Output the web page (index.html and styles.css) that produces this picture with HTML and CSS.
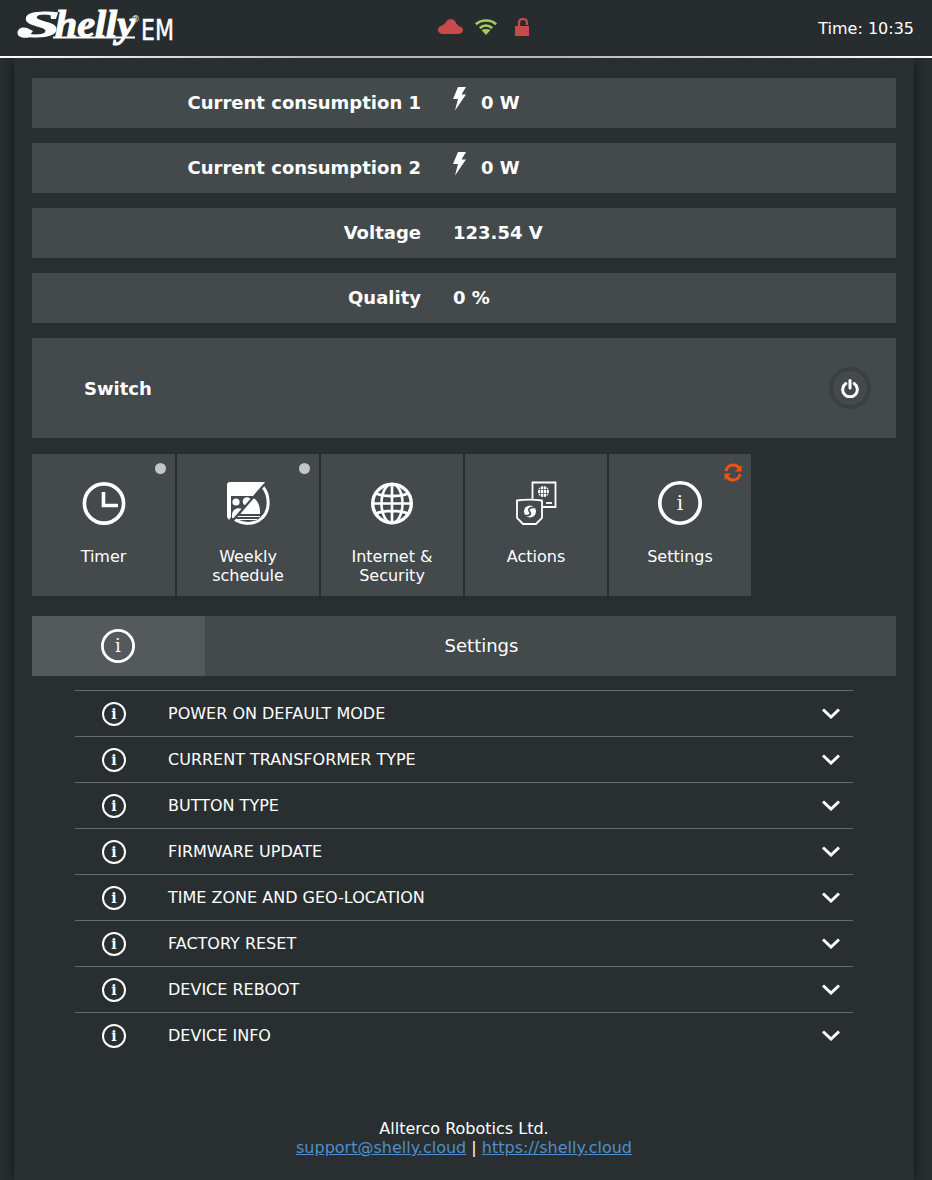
FILE: index.html
```html
<!DOCTYPE html>
<html lang="en">
<head>
<meta charset="utf-8">
<title>Shelly EM</title>
<link rel="stylesheet" href="styles.css">
</head>
<body>
<svg class="defs" width="0" height="0" aria-hidden="true">
  <symbol id="info" viewBox="0 0 34 34">
    <circle cx="17" cy="17" r="15.6" fill="none" stroke="currentColor" stroke-width="2.8"/>
  </symbol>
  <symbol id="chev" viewBox="0 0 18 11">
    <path d="M1 1.500 9 9 17 1.500" fill="none" stroke="currentColor" stroke-width="3"/>
  </symbol>
  <symbol id="bolt" viewBox="0 0 14 24">
    <path d="M6 0h8L9.500 7.500H14L3 23.500 6 12H1z" fill="currentColor"/>
  </symbol>
</svg>
<header class="topbar">
  <svg class="logo" width="180" height="56" viewBox="0 0 180 56">
    <path d="M.5 33C.5 28 6 26.500 10 28L16 31 11 37.500C6 38.500 .5 37 .5 33z" fill="#fff"/>
    <path d="M36 37.500H118" stroke="#fff" stroke-width="1.800"/>
    <text class="logo-script" y="37"><tspan x="3" textLength="40" lengthAdjust="spacingAndGlyphs">S</tspan><tspan x="38" textLength="80" lengthAdjust="spacingAndGlyphs">helly</tspan></text>
    <text class="logo-reg" x="114" y="22">®</text>
    <text class="logo-em" x="124" y="40" textLength="33" lengthAdjust="spacingAndGlyphs">EM</text>
  </svg>
  <div class="status">
    <svg class="st-cloud" width="25" height="15" viewBox="0 0 26 17" preserveAspectRatio="none"><path d="M5.500 17C2.500 17 0 15 0 12.200 0 9.600 2 8 4 7.600 4.500 6.800 5.500 6 7 6 8 2.500 10.500 0 13.500 0 16.500 0 18.500 2.500 19 5.500 19.800 5.400 20.500 6.500 21 7.800 23.800 8 26 9.800 26 12.500 26 15 24 17 21 17z" fill="#c94a4a"/></svg>
    <svg class="st-wifi" width="22" height="16" viewBox="0 0 22 16"><g fill="none" stroke="#a4cc5a" stroke-width="2.600"><path d="M.8 5.200C6.500 .2 15.500 .2 21.200 5.200"/><path d="M4.800 9C8.500 5.800 13.500 5.800 17.200 9"/></g><path d="M6.500 11 11 16 15.500 11C13 9.500 9 9.500 6.500 11z" fill="#a4cc5a"/></svg>
    <svg class="st-lock" width="14" height="18" viewBox="0 0 14 18"><path d="M4 9V5C4 2.500 5.500 1 8 1S12 2.500 12 5V7" fill="none" stroke="#c94a4a" stroke-width="2.200"/><rect y="8" width="14" height="10" fill="#c94a4a"/></svg>
  </div>
  <div class="clock">Time: 10:35</div>
</header>
<main class="panel">
  <section class="metrics">
    <div class="metric"><div class="m-label">Current consumption 1</div><div class="m-value"><svg class="bolt" width="14" height="24"><use href="#bolt"/></svg><span>0 W</span></div></div>
    <div class="metric"><div class="m-label">Current consumption 2</div><div class="m-value"><svg class="bolt" width="14" height="24"><use href="#bolt"/></svg><span>0 W</span></div></div>
    <div class="metric"><div class="m-label">Voltage</div><div class="m-value"><span>123.54 V</span></div></div>
    <div class="metric"><div class="m-label">Quality</div><div class="m-value"><span>0 %</span></div></div>
  </section>
  <section class="switch">
    <div class="switch-name">Switch</div>
    <div class="power"><svg width="18" height="19" viewBox="0 0 18 19"><path d="M4.800 4.600a7.300 7.300 0 1 0 8.400 0" fill="none" stroke="#fff" stroke-width="3" stroke-linecap="round"/><path d="M9 1.500V9" fill="none" stroke="#fff" stroke-width="3" stroke-linecap="round"/></svg></div>
  </section>
  <nav class="tiles">
    <div class="tile">
      <span class="dot"></span>
      <svg class="t-icon" width="44" height="44" viewBox="0 0 44 44"><circle cx="22" cy="22.500" r="19.600" fill="none" stroke="#fff" stroke-width="3.600"/><path d="M21.500 11V24.500H36" fill="none" stroke="#fff" stroke-width="3.600"/></svg>
      <div class="t-label">Timer</div>
    </div>
    <div class="tile">
      <span class="dot"></span>
      <svg class="t-icon" width="44" height="44" viewBox="0 0 44 44">
        <path d="M4 1H41L28 15H5V36L3 39 1 36V4C1 2 2 1 4 1z" fill="#fff"/>
        <circle cx="10" cy="21" r="3.600" fill="#fff"/>
        <circle cx="21" cy="20.500" r="4.300" fill="#fff"/>
        <path d="M6 33C7 28 12 26 16 28L8 37H6z" fill="#fff"/>
        <path d="M37 6C44 15 44 30 36 37 29 44 17 44 8 38" fill="none" stroke="#fff" stroke-width="3"/>
        <path d="M27 17C32 19 34.500 26 34 33H14z" fill="#fff"/>
        <path d="M11 35.500H34M9 38.500H31" stroke="#fff" stroke-width="1"/>
        <path d="M41 .5 3 44" stroke="#44494c" stroke-width="2.200"/>
      </svg>
      <div class="t-label">Weekly<br>schedule</div>
    </div>
    <div class="tile">
      <svg class="t-icon" width="44" height="44" viewBox="0 0 44 44"><g fill="none" stroke="#fff"><circle cx="22" cy="22.500" r="19.300" stroke-width="3.400"/><ellipse cx="22" cy="22.500" rx="10.500" ry="19.500" stroke-width="2.600"/><path d="M22 3V42M3 22.500H41M6 12.500C14 16 30 16 38 12.500M6 32.500C14 29 30 29 38 32.500" stroke-width="2.600"/></g></svg>
      <div class="t-label">Internet &amp;<br>Security</div>
    </div>
    <div class="tile">
      <svg class="t-icon" width="44" height="44" viewBox="0 0 44 44">
        <g fill="none" stroke="#fff" stroke-width="1.800"><path d="M18.500 18V1.500H41.500V26H28"/><path d="M3 19.500C9 18.500 21 18.500 28 19.500V37L22 43H9L3 37z"/></g>
        <circle cx="29.500" cy="10.500" r="5.500" fill="#fff"/>
        <path d="M24 8.500H35M24 12.500H35M29.500 5V16M26.500 5.500V15.500M32.500 5.500V15.500" stroke="#44494c" stroke-width=".7"/>
        <path d="M32 22H38" stroke="#fff" stroke-width="1.800"/>
        <circle cx="16" cy="30.500" r="6" fill="#fff"/>
        <path d="M21 26.500C16 26 13.500 28 15.500 30.500S16 35 11 34.500" fill="none" stroke="#44494c" stroke-width="1.700"/>
      </svg>
      <div class="t-label">Actions</div>
    </div>
    <div class="tile">
      <svg class="sync" width="18" height="19" viewBox="0 0 18 19"><g fill="none" stroke="#f0540f" stroke-width="3"><path d="M2 8C2.500 4.500 5.500 2 9 2 11.500 2 13.500 3 15 5"/><path d="M16 11C15.500 14.500 12.500 17 9 17 6.500 17 4.500 16 3 14"/></g><path d="M17.500 2V8.500H11zM.5 17V10.500H7z" fill="#f0540f"/></svg>
      <span class="ring ring-44"><svg width="44" height="44"><use href="#info"/></svg><b>i</b></span>
      <div class="t-label">Settings</div>
    </div>
  </nav>
  <div class="tabbar">
    <div class="tab-icon"><span class="ring ring-34"><svg width="34" height="34"><use href="#info"/></svg><b>i</b></span></div>
    <div class="tab-title">Settings</div>
  </div>
  <ul class="settings">
    <li class="row"><span class="ring ring-24"><svg width="24" height="24"><use href="#info"/></svg><b>i</b></span><span class="r-text">POWER ON DEFAULT MODE</span><svg class="chev" width="18" height="11"><use href="#chev"/></svg></li>
    <li class="row"><span class="ring ring-24"><svg width="24" height="24"><use href="#info"/></svg><b>i</b></span><span class="r-text">CURRENT TRANSFORMER TYPE</span><svg class="chev" width="18" height="11"><use href="#chev"/></svg></li>
    <li class="row"><span class="ring ring-24"><svg width="24" height="24"><use href="#info"/></svg><b>i</b></span><span class="r-text">BUTTON TYPE</span><svg class="chev" width="18" height="11"><use href="#chev"/></svg></li>
    <li class="row"><span class="ring ring-24"><svg width="24" height="24"><use href="#info"/></svg><b>i</b></span><span class="r-text">FIRMWARE UPDATE</span><svg class="chev" width="18" height="11"><use href="#chev"/></svg></li>
    <li class="row"><span class="ring ring-24"><svg width="24" height="24"><use href="#info"/></svg><b>i</b></span><span class="r-text">TIME ZONE AND GEO-LOCATION</span><svg class="chev" width="18" height="11"><use href="#chev"/></svg></li>
    <li class="row"><span class="ring ring-24"><svg width="24" height="24"><use href="#info"/></svg><b>i</b></span><span class="r-text">FACTORY RESET</span><svg class="chev" width="18" height="11"><use href="#chev"/></svg></li>
    <li class="row"><span class="ring ring-24"><svg width="24" height="24"><use href="#info"/></svg><b>i</b></span><span class="r-text">DEVICE REBOOT</span><svg class="chev" width="18" height="11"><use href="#chev"/></svg></li>
    <li class="row"><span class="ring ring-24"><svg width="24" height="24"><use href="#info"/></svg><b>i</b></span><span class="r-text">DEVICE INFO</span><svg class="chev" width="18" height="11"><use href="#chev"/></svg></li>
  </ul>
  <footer class="foot">
    <div>Allterco Robotics Ltd.</div>
    <div><a href="#">support@shelly.cloud</a> | <a href="#">https://shelly.cloud</a></div>
  </footer>
</main>
</body>
</html>
```
FILE: styles.css
```css
* { box-sizing: border-box; }
html, body { margin: 0; padding: 0; }
body {
  width: 932px;
  height: 1180px;
  overflow: hidden;
  background: #292f31;
  color: #fff;
  font-family: "DejaVu Sans", sans-serif;
  font-size: 16px;
  display: flex;
  flex-direction: column;
}
.defs { position: absolute; }
.topbar {
  height: 58px;
  flex: none;
  display: flex;
  align-items: center;
  background: #272d2f;
  border-bottom: 2px solid #c4c6c5;
  border-image: linear-gradient(90deg, #fff, #b5b8b5 35%, #b5b8b5 60%, #fff) 1;
  position: relative;
  z-index: 2;
  padding-left: 17px;
  padding-right: 18px;
}
.logo { flex: none; display: block; }
.logo text { fill: #fff; }
.logo-script {
  font-family: "Liberation Serif", serif;
  font-weight: 700;
  font-style: italic;
  font-size: 37px;
  stroke: #fff;
  stroke-width: 1px;
}
.logo-reg { font-size: 9px; font-family: "DejaVu Sans", sans-serif; }
.logo-em { font-size: 29px; font-family: "DejaVu Sans", sans-serif; stroke: #fff; stroke-width: .5px; }
.status { display: flex; align-items: flex-start; height: 56px; padding-top: 18px; width: 92px; margin-left: 241px; }
.st-cloud { margin-right: 12px; margin-top: 1px; }
.st-wifi { margin-right: 18px; margin-top: 1px; }
.st-lock { margin-top: 0; }
.clock { margin-left: auto; font-size: 16px; color: #fff; }
.panel {
  flex: 1;
  width: 900px;
  margin-left: 14px;
  background: #292f31;
  box-shadow: 0 0 14px rgba(0,0,0,.6);
  padding: 20px 18px 0;
  position: relative;
  z-index: 1;
}
.metrics { display: flex; flex-direction: column; gap: 15px; }
.metric {
  height: 50px;
  background: #44494c;
  display: flex;
  align-items: center;
  font-weight: 700;
  font-size: 18px;
  padding-bottom: 2px;
}
.m-label { width: 389px; text-align: right; }
.m-value { margin-left: 32px; display: flex; align-items: center; }
.bolt { margin-right: 15px; margin-left: -1px; margin-top: -7px; }
.switch {
  margin-top: 15px;
  height: 100px;
  background: #44494c;
  display: flex;
  align-items: center;
  justify-content: space-between;
  padding: 0 25px 0 52px;
  font-weight: 700;
  font-size: 18px;
}
.power {
  width: 42px;
  height: 42px;
  border-radius: 50%;
  border: 4px solid #3a3f42;
  display: flex;
  align-items: center;
  justify-content: center;
}
.tiles { margin-top: 16px; display: flex; gap: 2px; }
.tile {
  width: 142px;
  height: 142px;
  background: #44494c;
  position: relative;
  padding-top: 27px;
  text-align: center;
  font-size: 16px;
  line-height: 19px;
}
.tile:first-child { width: 143px; }
.t-icon { display: block; margin: 0 auto; }
.t-label { margin-top: 22px; }
.dot {
  position: absolute;
  top: 9px;
  right: 9px;
  width: 11px;
  height: 11px;
  border-radius: 50%;
  background: #c4c6c6;
}
.sync { position: absolute; top: 9px; right: 9px; }
.tabbar { margin-top: 20px; height: 60px; background: #44494c; display: flex; align-items: center; }
.tab-icon { width: 173px; height: 60px; background: #54595c; display: flex; align-items: center; justify-content: center; padding-right: 1px; }
.tab-title { flex: 1; text-align: center; font-size: 18px; padding-right: 138px; padding-bottom: 2px; }
.ring { position: relative; display: block; font-family: "DejaVu Serif", serif; }
.ring svg { display: block; }
.ring b { position: absolute; inset: 0; text-align: center; font-weight: 400; }
.ring-44 { width: 44px; height: 44px; margin: 0 auto; }
.ring-44 b { font-size: 20px; line-height: 44px; }
.ring-34 { width: 34px; height: 34px; }
.ring-34 b { font-size: 18px; line-height: 34px; }
.ring-24 { width: 24px; height: 24px; }
.ring-24 b { font-size: 14px; font-weight: 700; line-height: 24px; }
.settings { list-style: none; margin: 14px 43px 0; padding: 0; }
.row {
  height: 46px;
  border-top: 1px solid #666a6c;
  display: flex;
  align-items: center;
  padding-left: 27px;
  padding-right: 13px;
  font-size: 16px;
}
.r-text { margin-left: 42px; flex: 1; }
.foot { margin-top: 61px; text-align: center; font-size: 16px; line-height: 19px; }
.foot a { color: #4f8fcb; }
```
